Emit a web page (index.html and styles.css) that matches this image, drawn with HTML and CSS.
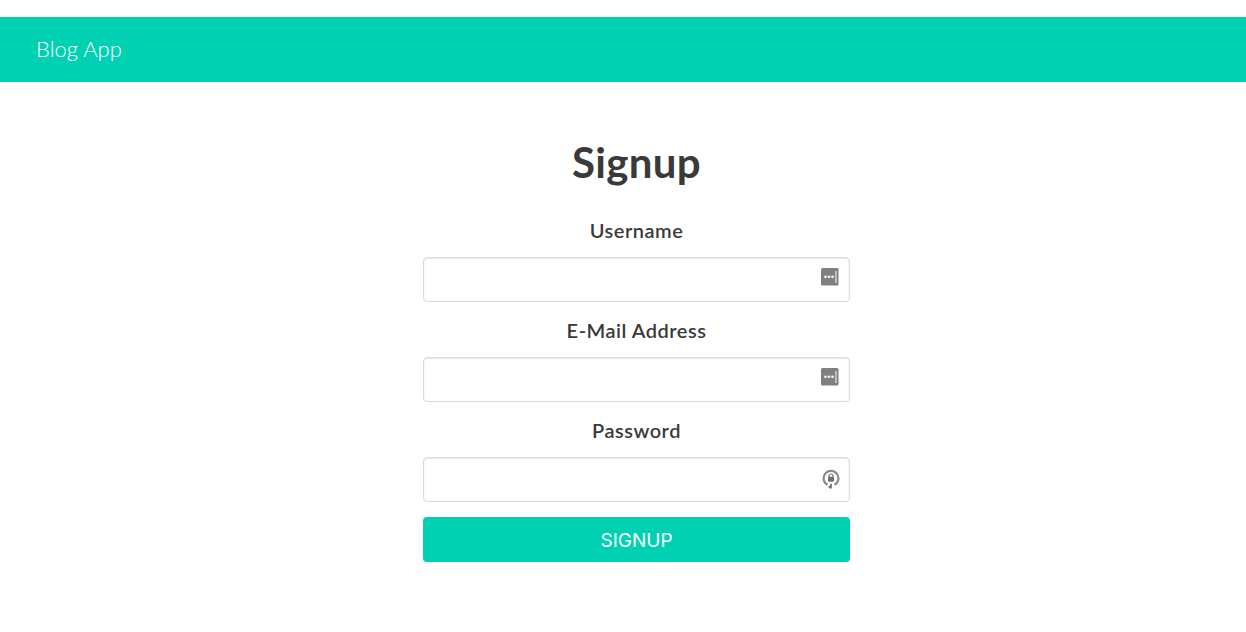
FILE: index.html
```html
<!DOCTYPE html>
<html lang="en">
<head>
<meta charset="utf-8">
<title>Signup</title>
<link rel="stylesheet" href="styles.css">
</head>
<body>
<header class="navbar"><a class="brand" href="#">Blog App</a></header>
<main class="content">
  <h1 class="title">Signup</h1>
  <form class="form">
    <div class="field">
      <label class="label" for="u">Username</label>
      <div class="control">
        <input class="input" id="u" type="text">
        <svg class="autofill" viewBox="0 0 18 18" aria-hidden="true"><rect x="0" y="0" width="17.5" height="17.5" rx="1.5" fill="#808080"/><circle cx="4.5" cy="8.8" r="1.4" fill="#eee"/><circle cx="8" cy="8.8" r="1.4" fill="#eee"/><circle cx="11.5" cy="8.8" r="1.4" fill="#eee"/><rect x="14.4" y="3" width="1.1" height="12" fill="#eee"/></svg>
      </div>
    </div>
    <div class="field">
      <label class="label" for="e">E-Mail Address</label>
      <div class="control">
        <input class="input" id="e" type="text">
        <svg class="autofill" viewBox="0 0 18 18" aria-hidden="true"><rect x="0" y="0" width="17.5" height="17.5" rx="1.5" fill="#808080"/><circle cx="4.5" cy="8.8" r="1.4" fill="#eee"/><circle cx="8" cy="8.8" r="1.4" fill="#eee"/><circle cx="11.5" cy="8.8" r="1.4" fill="#eee"/><rect x="14.4" y="3" width="1.1" height="12" fill="#eee"/></svg>
      </div>
    </div>
    <div class="field">
      <label class="label" for="p">Password</label>
      <div class="control">
        <input class="input" id="p" type="password">
        <svg class="autofill autofill-key" viewBox="0 0 18 20" aria-hidden="true"><path d="M5.5 15.8A7.4 7.4 0 1 1 12.5 15.8" fill="none" stroke="#8a8a8a" stroke-width="2.2"/><path d="M9 14.8v4.4M9 19.2l-2.4-2" fill="none" stroke="#777" stroke-width="1.8"/><rect x="6" y="7.8" width="6" height="5" rx="1" fill="#6f6f6f"/><circle cx="9" cy="7" r="2" fill="none" stroke="#777" stroke-width="1.2"/></svg>
      </div>
    </div>
    <button class="button" type="button">SIGNUP</button>
  </form>
</main>
</body>
</html>
```
FILE: styles.css
```css
* {
  box-sizing: border-box;
}

body {
  margin: 0;
  padding-top: 17px;
  background: #fff;
  color: #363636;
  font-family: "Lato", "Open Sans", sans-serif;
}

.navbar {
  display: flex;
  align-items: center;
  height: 65px;
  padding-left: 36px;
  padding-bottom: 2px;
  background: #00d1b2;
}

.brand {
  color: #fff;
  font-size: 22px;
  font-weight: 300;
  text-decoration: none;
}

.content {
  width: 427px;
  margin-left: 423px;
}

.title {
  margin: 0;
  padding-top: 54px;
  height: 134px;
  font-size: 42px;
  line-height: 52px;
  font-weight: 700;
  letter-spacing: 0.3px;
  text-align: center;
  color: #3a3a3a;
}

.form {
  display: flex;
  flex-direction: column;
}

.field {
  height: 100px;
}

.label {
  display: block;
  height: 41px;
  font-size: 20px;
  line-height: 28px;
  font-weight: 600;
  letter-spacing: 0.5px;
  text-align: center;
  color: #3a3a3a;
}

.control {
  position: relative;
  height: 45px;
}

.input {
  display: block;
  width: 100%;
  height: 45px;
  border: 1px solid #dbdbdb;
  border-radius: 4px;
  background: #fff;
  box-shadow: inset 0 1px 2px rgba(10, 10, 10, 0.1);
  outline: none;
}

.autofill {
  position: absolute;
  top: 11px;
  right: 11px;
  width: 18px;
  height: 18px;
  filter: blur(0.6px);
}

.autofill-key {
  top: 12px;
  right: 10px;
  height: 20px;
}

.button {
  height: 45px;
  margin-top: 1px;
  padding: 1px 0 0;
  border: 0;
  border-radius: 4px;
  background: #00d1b2;
  color: #fff;
  font-family: "Inter", "Liberation Sans", sans-serif;
  font-size: 19px;
  font-weight: 400;
}
```
